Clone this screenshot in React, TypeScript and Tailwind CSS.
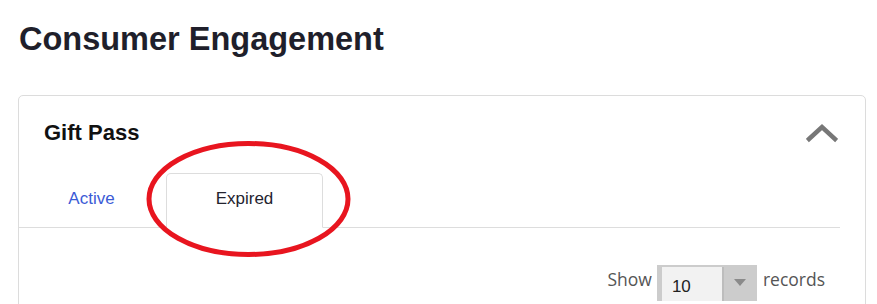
import { useState } from "react"

const tabs = [
  { id: "active", label: "Active", width: "w-[145px]" },
  { id: "expired", label: "Expired", width: "w-[157px]" },
]

function ChevronUp() {
  return (
    <svg width="32" height="20" viewBox="0 0 32 20" className="text-[#777]">
      <polyline points="3,16 16,4 29,16" fill="none" stroke="currentColor" strokeWidth="4.5" strokeLinecap="square" />
    </svg>
  )
}

function RecordsSelect() {
  return (
    <div className="flex h-[36px] bg-[#cccccc] pl-[5px] pt-[2px]">
      <div className="w-[60px] bg-[#f2f2f2] pl-[10px] pt-[10px] text-[17px] leading-[20px] text-[#222] font-['Liberation_Sans',Arial,sans-serif]">
        10
      </div>
      <div className="w-[2px] bg-[#bdbdbd]" />
      <div className="flex w-[33px] items-start justify-center pt-[12px]">
        <svg width="12" height="7" viewBox="0 0 12 7">
          <polygon points="0,0 12,0 6,7" fill="#8a8a8a" />
        </svg>
      </div>
    </div>
  )
}

export default function App() {
  const [tab, setTab] = useState("expired")

  return (
    <div className="relative h-[304px] w-full overflow-hidden bg-white font-['Liberation_Sans',Arial,sans-serif]">
      <h1 className="pl-[19px] pt-[21px] text-[32.5px] font-bold leading-[36px] text-[#1f1f2b]">Consumer Engagement</h1>

      <div className="ml-[18px] mr-[11px] mt-[38px] h-[260px] rounded-[5px] border border-[#dcdcdc]">
        <div className="flex items-center justify-between pl-[25px] pr-[27px] pt-[24px]">
          <h2 className="text-[22px] font-bold leading-[26px] text-[#111]">Gift Pass</h2>
          <ChevronUp />
        </div>

        <div className="mr-[25px] mt-[27px] flex items-start gap-[2px] border-b border-[#dddddd]">
          {tabs.map((t) => (
            <div
              key={t.id}
              role="tab"
              onClick={() => setTab(t.id)}
              className={`-mb-px h-[55px] ${t.width} cursor-pointer rounded-t-[5px] border pt-[15px] text-center text-[17px] leading-[20px] ${
                tab === t.id
                  ? "border-[#dddddd] border-b-white bg-white text-[#23232f]"
                  : "border-transparent text-[#3b5bd6]"
              }`}
            >
              {t.label}
            </div>
          ))}
        </div>

        <div className="flex items-start justify-end pr-[40px] pt-[37px] font-['Open_Sans',sans-serif] text-[17.5px] leading-[24px] text-[#555]">
          <span className="mt-[2px]">Show</span>
          <div className="ml-[5px]">
            <RecordsSelect />
          </div>
          <span className="ml-[6px] mt-[2px]">records</span>
        </div>
      </div>

      <svg className="pointer-events-none absolute left-0 top-0" width="877" height="304">
        <ellipse cx="248.5" cy="199" rx="99.5" ry="55.5" fill="none" stroke="#e8151f" strokeWidth="5" />
      </svg>
    </div>
  )
}
